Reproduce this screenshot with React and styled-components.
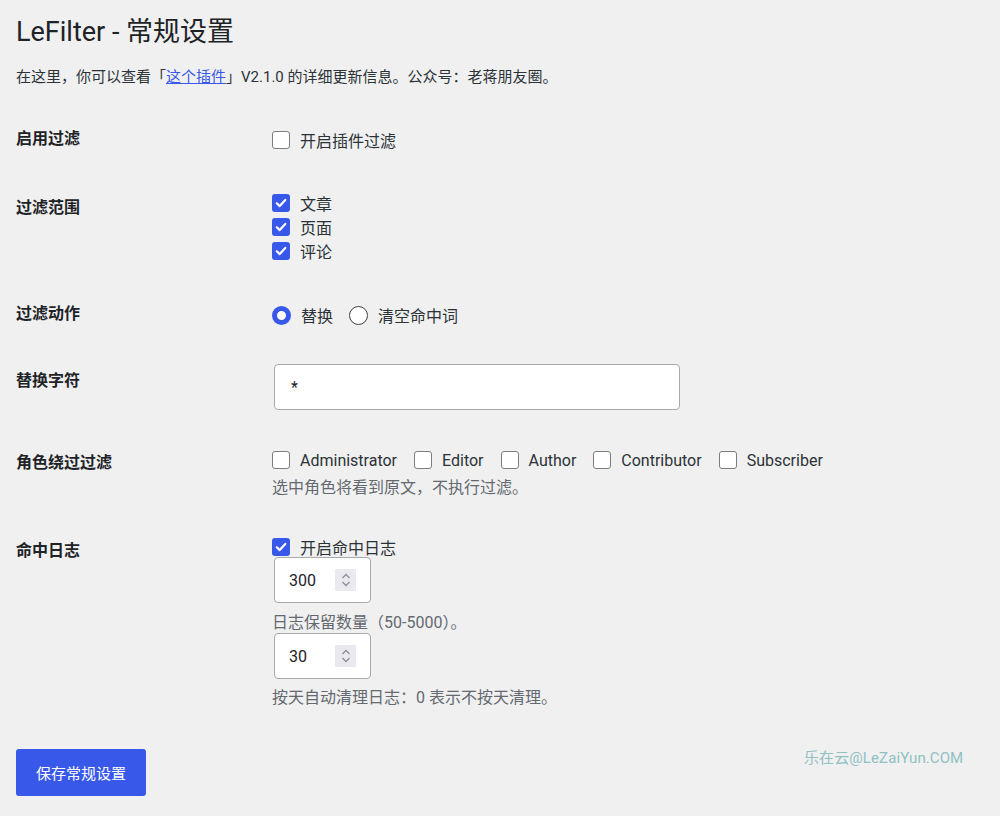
import styled, { createGlobalStyle } from "styled-components";

const GlobalStyle = createGlobalStyle`
  body {
    margin: 0;
    background: #f0f0f0;
    font-family: Roboto, "Noto Sans CJK SC", sans-serif;
    color: #1d2327;
  }
`;

const Page = styled.div`
  position: relative;
  min-height: 816px;
  padding: 17px 16px 0;
  box-sizing: border-box;
`;

const Title = styled.h1`
  margin: 0;
  font-size: 27px;
  font-weight: 400;
  line-height: 30px;
  color: #1d2327;
`;

const Intro = styled.p`
  margin: 19px 0 0;
  font-size: 15px;
  line-height: 22px;
  color: #2c3338;
  a {
    color: #3858e9;
    text-decoration: underline;
  }
`;

const Form = styled.form`
  display: flex;
  flex-direction: column;
`;

const Row = styled.div`
  display: grid;
  grid-template-columns: 256px 1fr;
  align-items: start;
  margin-top: ${(p) => p.$top}px;
`;

const Label = styled.div`
  font-size: 16px;
  font-weight: 700;
  line-height: 22px;
  padding-top: ${(p) => p.$offset || 0}px;
  color: #1d2327;
`;

const Field = styled.div`
  display: flex;
  flex-direction: column;
  align-items: flex-start;
`;

const Options = styled.div`
  display: flex;
  align-items: center;
  gap: ${(p) => p.$gap || 17}px;
`;

const Option = styled.label`
  display: flex;
  align-items: center;
  gap: 10px;
  height: ${(p) => p.$h || 24}px;
  font-size: 16px;
  color: #2c3338;
  white-space: nowrap;
`;

const Box = styled.span`
  display: inline-flex;
  align-items: center;
  justify-content: center;
  width: 18px;
  height: 18px;
  box-sizing: border-box;
  border-radius: 3px;
  border: ${(p) => (p.$checked ? "none" : "1.5px solid #7a7d82")};
  background: ${(p) => (p.$checked ? "#3858e9" : "#fff")};
`;

const Radio = styled.span`
  display: inline-block;
  width: 19px;
  height: 19px;
  box-sizing: border-box;
  border-radius: 50%;
  background: #fff;
  border: ${(p) => (p.$checked ? "5px solid #3858e9" : "1.5px solid #3c3f44")};
`;

const TextInput = styled.input`
  width: 406px;
  height: 46px;
  box-sizing: border-box;
  margin: 0 0 0 2px;
  padding: 0 16px;
  border: 1px solid #a7aaad;
  border-radius: 4px;
  background: #fff;
  font-family: inherit;
  font-size: 16px;
  color: #1d2327;
  outline: none;
`;

const NumberBox = styled.div`
  display: flex;
  align-items: center;
  justify-content: space-between;
  width: 97px;
  height: 46px;
  box-sizing: border-box;
  margin: ${(p) => p.$mt || 0}px 0 0 2px;
  padding: 0 14px 0 14px;
  border: 1px solid #a7aaad;
  border-radius: 4px;
  background: #fff;
  font-size: 16px;
  color: #1d2327;
`;

const Spinner = styled.span`
  display: inline-flex;
  align-items: center;
  justify-content: center;
  width: 21px;
  height: 22px;
  background: #e9e9ef;
`;

const Desc = styled.p`
  margin: ${(p) => p.$mt || 0}px 0 0;
  font-size: 16px;
  line-height: 20px;
  color: #646970;
`;

const SaveButton = styled.button`
  margin-top: 41px;
  width: 130px;
  height: 47px;
  border: none;
  border-radius: 3px;
  background: #3858e9;
  color: #fff;
  font-family: inherit;
  font-size: 15px;
  cursor: pointer;
`;

const Watermark = styled.div`
  position: absolute;
  left: 804px;
  top: 748px;
  font-size: 15px;
  line-height: 20px;
  color: #8fc0c3;
  letter-spacing: 0.1px;
`;

function Check({ checked }) {
  return (
    <Box $checked={checked}>
      {checked && (
        <svg width="12" height="12" viewBox="0 0 12 12">
          <path d="M1.8 6.3 L4.7 9.1 L10.3 2.9" fill="none" stroke="#fff" strokeWidth="2.2" strokeLinecap="round" strokeLinejoin="round" />
        </svg>
      )}
    </Box>
  );
}

function Number({ value, mt }) {
  return (
    <NumberBox $mt={mt}>
      <span>{value}</span>
      <Spinner>
        <svg width="12" height="16" viewBox="0 0 12 16">
          <path d="M2.5 6 L6 2.5 L9.5 6 M2.5 10 L6 13.5 L9.5 10" fill="none" stroke="#8c8f94" strokeWidth="1.3" />
        </svg>
      </Spinner>
    </NumberBox>
  );
}

const roles = ["Administrator", "Editor", "Author", "Contributor", "Subscriber"];

export default function App() {
  return (
    <Page>
      <GlobalStyle />
      <Title>LeFilter - 常规设置</Title>
      <Intro>
        在这里，你可以查看「<a href="#">这个插件</a>」V2.1.0 的详细更新信息。公众号：老蒋朋友圈。
      </Intro>
      <Form>
        <Row $top={40}>
          <Label>启用过滤</Label>
          <Field>
            <Option>
              <Check />
              开启插件过滤
            </Option>
          </Field>
        </Row>
        <Row $top={39}>
          <Label $offset={6}>过滤范围</Label>
          <Field>
            <Option><Check checked />文章</Option>
            <Option><Check checked />页面</Option>
            <Option><Check checked />评论</Option>
          </Field>
        </Row>
        <Row $top={40}>
          <Label>过滤动作</Label>
          <Options $gap={16}>
            <Option><Radio $checked />替换</Option>
            <Option><Radio />清空命中词</Option>
          </Options>
        </Row>
        <Row $top={37}>
          <Label $offset={6}>替换字符</Label>
          <Field>
            <TextInput defaultValue="*" />
          </Field>
        </Row>
        <Row $top={38}>
          <Label $offset={4}>角色绕过过滤</Label>
          <Field>
            <Options>
              {roles.map((r) => (
                <Option key={r}><Check />{r}</Option>
              ))}
            </Options>
            <Desc $mt={6}>选中角色将看到原文，不执行过滤。</Desc>
          </Field>
        </Row>
        <Row $top={39}>
          <Label $offset={3}>命中日志</Label>
          <Field>
            <Option $h={20}><Check checked />开启命中日志</Option>
            <Number value="300" />
            <Desc $mt={10}>日志保留数量（50-5000）。</Desc>
            <Number value="30" />
            <Desc $mt={9}>按天自动清理日志：0 表示不按天清理。</Desc>
          </Field>
        </Row>
      </Form>
      <SaveButton type="button">保存常规设置</SaveButton>
      <Watermark>乐在云@LeZaiYun.COM</Watermark>
    </Page>
  );
}
